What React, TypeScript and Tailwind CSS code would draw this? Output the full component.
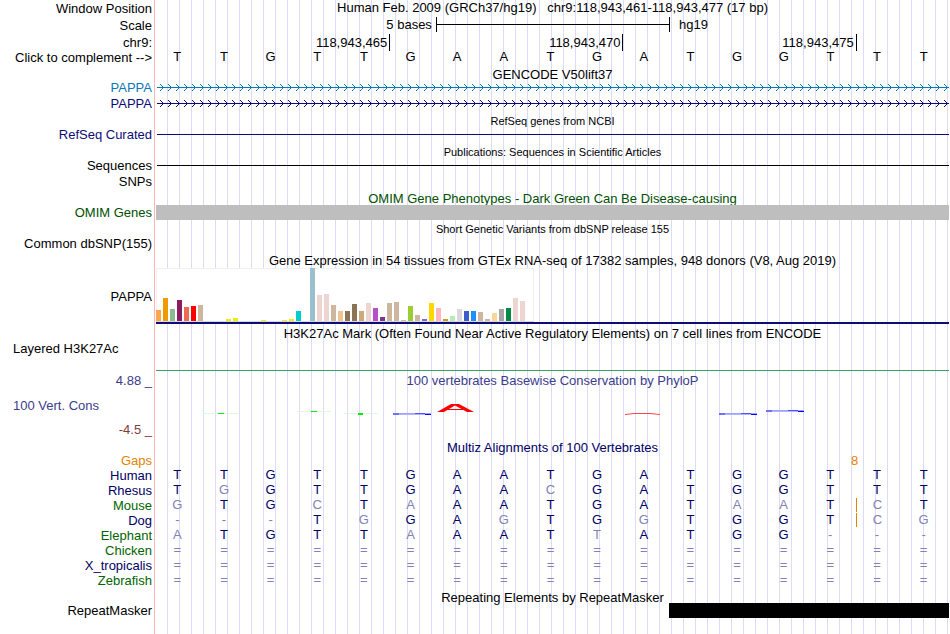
import type { ReactNode } from "react";
import clsx from "clsx";

const WINDOW_BASES = "TTGTTGAATGATGGTTT".split("");

// GTEx tissues in display order: [bar height, colour]
const TISSUES: [number, string][] = [
  [11, "#ffa54f"],
  [23, "#ee9a00"],
  [12, "#8fbc8f"],
  [21, "#8b1c62"],
  [14, "#ee6a50"],
  [15, "#ff0000"],
  [16, "#cdb79e"],
  [0, "#eeee00"],
  [0, "#eeee00"],
  [0, "#eeee00"],
  [2, "#eeee00"],
  [3, "#eeee00"],
  [0, "#eeee00"],
  [0, "#eeee00"],
  [0, "#eeee00"],
  [1, "#eeee00"],
  [0, "#eeee00"],
  [0, "#eeee00"],
  [1, "#eeee00"],
  [2, "#eeee00"],
  [10, "#00cdcd"],
  [0, "#ee82ee"],
  [53, "#9ac0cd"],
  [26, "#eed5d2"],
  [27, "#eed5d2"],
  [16, "#cdb79e"],
  [10, "#eec591"],
  [10, "#8b7355"],
  [17, "#8b7355"],
  [10, "#cdaa7d"],
  [18, "#eed5d2"],
  [13, "#b452cd"],
  [4, "#7a378b"],
  [18, "#cdb79e"],
  [19, "#cdb79e"],
  [1, "#cdb79e"],
  [15, "#9acd32"],
  [6, "#cdb79e"],
  [2, "#7a67ee"],
  [18, "#ffd700"],
  [13, "#ffb6c1"],
  [2, "#cd9b1d"],
  [5, "#b4eeb4"],
  [12, "#d9d9d9"],
  [10, "#3a5fcd"],
  [10, "#1e90ff"],
  [9, "#cdb79e"],
  [2, "#cdb79e"],
  [8, "#ffd39b"],
  [12, "#a6a6a6"],
  [13, "#008b45"],
  [23, "#eed5d2"],
  [20, "#eed5d2"],
  [0, "#ff00ff"],
];

// Lower case marks a base that differs from human.
const SPECIES = [
  { name: "Human", color: "text-[#000064]", bases: "TTGTTGAATGATGGTTT" },
  { name: "Rhesus", color: "text-[#000064]", bases: "TgGTTGAAcGATGGTTT" },
  { name: "Mouse", color: "text-[#006400]", bases: "gTGcTaAATGATaaTcT", insertAt: 15 },
  { name: "Dog", color: "text-[#000064]", bases: "---TgGAgTGgTGGTcg", insertAt: 15 },
  { name: "Elephant", color: "text-[#006400]", bases: "aTGTTaAATtATGG---" },
  { name: "Chicken", color: "text-[#006400]", bases: "=================" },
  { name: "X_tropicalis", color: "text-[#000064]", bases: "=================" },
  { name: "Zebrafish", color: "text-[#006400]", bases: "=================" },
];

function Row({
  label,
  height,
  color = "text-black",
  children,
}: {
  label?: ReactNode;
  height: string;
  color?: string;
  children?: ReactNode;
}) {
  return (
    <div className={clsx("grid grid-cols-[156px_minmax(0,1fr)]", height)}>
      <div className={clsx("flex items-center justify-end pr-1", color)}>{label}</div>
      <div className="min-w-0">{children}</div>
    </div>
  );
}

function Title({
  height,
  color = "text-black",
  small,
  children,
}: {
  height: string;
  color?: string;
  small?: boolean;
  children: ReactNode;
}) {
  return (
    <Row height={height}>
      <h2
        className={clsx(
          "flex h-full items-center justify-center pt-[2px] whitespace-pre",
          small ? "text-[11px]" : "text-[13px]",
          color,
        )}
      >
        {children}
      </h2>
    </Row>
  );
}

function Transcript({ id, color }: { id: string; color: string }) {
  return (
    <svg className="h-[15px] w-full pl-px" shapeRendering="crispEdges" aria-hidden="true">
      <defs>
        <pattern id={id} width="8" height="15" patternUnits="userSpaceOnUse">
          <path
            d="M3 4h1v1h1v1h1v1h1v1h-1v1h-1v1h-1v1h-1v-1h1v-1h1v-1h1v-1h-1v-1h-1v-1h-1z"
            fill={color}
          />
        </pattern>
      </defs>
      <rect width="100%" height="15" fill={`url(#${id})`} />
      <rect y="7" width="100%" height="1" fill={color} />
    </svg>
  );
}

function ExpressionChart() {
  return (
    <div className="h-full border-b-2 border-[#0c0c78]">
      <svg width="378" height="54" shapeRendering="crispEdges" role="img" aria-label="PAPPA expression by tissue">
        <rect width="378" height="54" fill="#f0f0f0" />
        <rect x="1" y="1" width="376" height="52" fill="#fff" />
        <rect y="53" width="378" height="1" fill="#d8d8d8" />
        {TISSUES.map(([h, fill], i) => (
          <rect key={i} x={i * 7} y={53 - h} width="5" height={h} fill={fill} />
        ))}
      </svg>
    </div>
  );
}

function ConservationPlot() {
  return (
    <svg className="h-[50px] w-full" viewBox="0 0 793 50" preserveAspectRatio="none" aria-hidden="true">
      <g fill="#dcfadc">
        <rect x="47" y="25" width="35" height="1" />
        <rect x="141" y="23" width="34" height="1" />
        <rect x="188" y="25" width="34" height="1" />
      </g>
      <g fill="#00f000">
        <rect x="62" y="25" width="6" height="1" />
        <rect x="155" y="23" width="6" height="1" />
        <rect x="202" y="25" width="5" height="2" />
      </g>
      {[
        [237, 25],
        [563, 25],
        [610, 22],
      ].map(([x, y]) => (
        <g key={x}>
          <rect x={x} y={y} width="38" height="1" fill="#a0a0ff" />
          <rect x={x} y={y} width="6" height="2" fill="#7070ff" />
          <rect x={x + 6} y={y + 1} width="26" height="1" fill="#b4b4ff" />
          <rect x={x + 22} y={y} width="10" height="1" fill="#5050ff" />
          <rect x={x + 32} y={y + 1} width="6" height="1" fill="#0000ff" />
        </g>
      ))}
      <path d="M281 24L295 16H303L318 24H311L299 17.5L288 24Z" fill="#ff0000" />
      <rect x="291" y="21" width="16" height="1" fill="#ff0000" />
      <path d="M469 26.5L478 25.5H494L504 26.5" fill="none" stroke="#ff4646" />
    </svg>
  );
}

function Alignment() {
  return (
    <table className="w-full table-fixed border-collapse text-center leading-[15px]">
      <colgroup>
        <col className="w-[156px]" />
        {WINDOW_BASES.map((_, i) => (
          <col key={i} />
        ))}
      </colgroup>
      <tbody>
        <tr className="h-[15px] text-[#e68200]">
          <th scope="row" className="p-0 pr-1 text-right font-normal">
            Gaps
          </th>
          <td colSpan={14} className="p-0" />
          <td colSpan={2} className="p-0 pr-[2px]">
            8
          </td>
          <td className="p-0" />
        </tr>
        {SPECIES.map((s) => (
          <tr key={s.name} className="h-[15px]">
            <th scope="row" className={clsx("p-0 pr-1 text-right font-normal", s.color)}>
              {s.name}
            </th>
            {s.bases.split("").map((b, i) => (
              <td
                key={i}
                className={clsx(
                  "p-0 align-top",
                  /[A-Z]/.test(b) ? "text-[#000064]" : "text-[#8282b4]",
                )}
              >
                <span
                  className={clsx(
                    "block h-[14px] pr-1 leading-[14px]",
                    i === s.insertAt && "border-l border-[#e68200]",
                  )}
                >
                  {b.toUpperCase()}
                </span>
              </td>
            ))}
          </tr>
        ))}
      </tbody>
    </table>
  );
}

export default function App() {
  return (
    <main className="min-h-screen overflow-hidden bg-[linear-gradient(90deg,#fff_154px,#ffb4b4_154px,#ffb4b4_155px,#fff_155px,#fff_156px,transparent_156px),repeating-linear-gradient(90deg,#fff_0px,#fff_11px,#dcdcf8_11px,#dcdcf8_12px)] pr-px font-['Liberation_Sans',Arial,sans-serif] text-[13px] leading-[15px] text-black">
      <Row label="Window Position" height="h-[17px]">
        <h1 className="text-center whitespace-pre">
          {"Human Feb. 2009 (GRCh37/hg19)   chr9:118,943,461-118,943,477 (17 bp)"}
        </h1>
      </Row>
      <Row label="Scale" height="h-[17px]">
        <div className="grid h-[15px] grid-cols-17 items-center">
          <span className="col-span-6 pr-1 text-right">5 bases</span>
          <span className="col-span-5 flex h-full items-center border-l border-black">
            <span className="h-px w-full bg-black" />
          </span>
          <span className="col-span-6 flex h-full items-center border-l border-black pl-[9px]">
            hg19
          </span>
        </div>
      </Row>
      <Row label="chr9:" height="h-4">
        <div className="grid h-[14px] grid-cols-17 text-right leading-[17px]">
          <span className="col-span-5 pr-[2px]">118,943,465</span>
          <span className="col-span-5 border-l border-black pr-[2px]">118,943,470</span>
          <span className="col-span-5 border-l border-black pr-[2px]">118,943,475</span>
          <span className="col-span-2 border-l border-black" />
        </div>
      </Row>
      <Row
        label={<button className="whitespace-nowrap">Click to complement --&gt;</button>}
        height="h-[15px]"
      >
        <div className="grid grid-cols-17 text-center leading-[13px]">
          {WINDOW_BASES.map((b, i) => (
            <span key={i} className="pr-1">
              {b}
            </span>
          ))}
        </div>
      </Row>

      <Title height="h-[15px]">GENCODE V50lift37</Title>
      <Row label="PAPPA" height="mb-px h-[15px]" color="text-[#0c78b4]">
        <Transcript id="arrows-mane" color="#0c78b4" />
      </Row>
      <Row label="PAPPA" height="mb-px h-[15px]" color="text-[#0c0c78]">
        <Transcript id="arrows-coding" color="#0c0c78" />
      </Row>

      <Title height="h-[15px]" small>
        RefSeq genes from NCBI
      </Title>
      <Row label="RefSeq Curated" height="mb-px h-[15px]" color="text-[#0c0c78]">
        <div className="mt-[7px] ml-px h-px bg-[#0c0c78]" />
      </Row>

      <Title height="h-[15px]" small>
        Publications: Sequences in Scientific Articles
      </Title>
      <Row label="Sequences" height="h-[15px]">
        <div className="mt-[7px] ml-px h-px bg-black" />
      </Row>
      <Row label="SNPs" height="h-4" />

      <Title height="h-4" color="text-[#005000]">
        OMIM Gene Phenotypes - Dark Green Can Be Disease-causing
      </Title>
      <Row label="OMIM Genes" height="h-[15px]" color="text-[#005000]">
        <div className="h-full bg-[#bebebe]" />
      </Row>

      <Title height="h-4" small>
        Short Genetic Variants from dbSNP release 155
      </Title>
      <Row label="Common dbSNP(155)" height="h-[15px]" />

      <Title height="h-[17px]">
        Gene Expression in 54 tissues from GTEx RNA-seq of 17382 samples, 948 donors (V8, Aug 2019)
      </Title>
      <Row label="PAPPA" height="h-[56px]">
        <ExpressionChart />
      </Row>

      <Title height="h-[17px]">
        H3K27Ac Mark (Often Found Near Active Regulatory Elements) on 7 cell lines from ENCODE
      </Title>
      <div className="grid h-8 grid-cols-[156px_minmax(0,1fr)]">
        <div className="pl-[13px]">Layered H3K27Ac</div>
        <div className="mt-[29px] h-px bg-[#3ca064]" />
      </div>

      <section className="grid h-[65px] grid-cols-[156px_minmax(0,1fr)] text-[#3c3c8c]">
        <div className="flex flex-col justify-between pr-1 pb-px pl-[13px]">
          <span className="text-right">4.88 _</span>
          <span>100 Vert. Cons</span>
          <span className="text-right text-[#823c3c]">-4.5 _</span>
        </div>
        <div>
          <h2 className="text-center">100 vertebrates Basewise Conservation by PhyloP</h2>
          <ConservationPlot />
        </div>
      </section>

      <Title height="h-[15px]" color="text-[#000064]">
        Multiz Alignments of 100 Vertebrates
      </Title>
      <Alignment />

      <Title height="h-[15px]">Repeating Elements by RepeatMasker</Title>
      <Row label="RepeatMasker" height="h-[15px]">
        <div className="grid h-full grid-cols-17">
          <div className="col-span-6 col-start-12 bg-black" />
        </div>
      </Row>
    </main>
  );
}
